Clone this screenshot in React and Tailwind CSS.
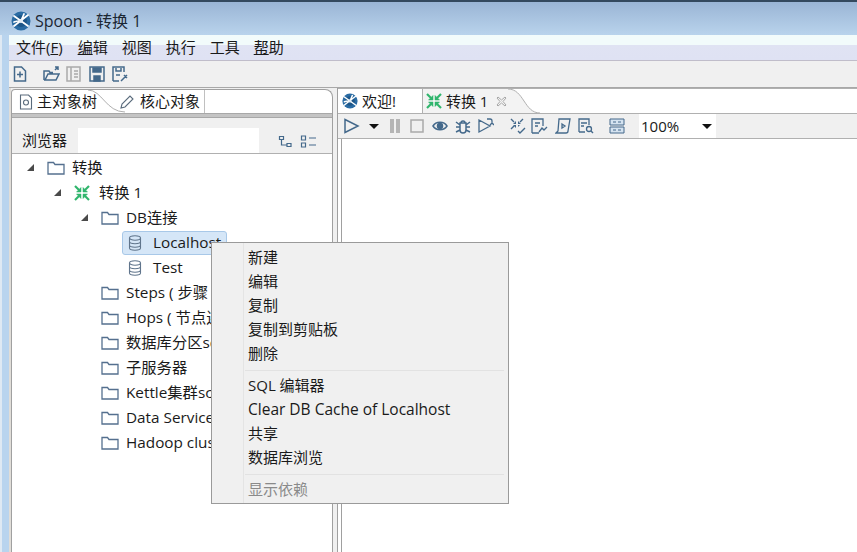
const font = { fontFamily: '"Open Sans", "Noto Sans CJK SC", sans-serif' };

const SpoonLogo = ({ size = 20 }) => (
  <svg width={size} height={size} viewBox="0 0 20 20" className="shrink-0">
    <circle cx="10" cy="10" r="9.500" fill="#2a6ba3" />
    <circle cx="10" cy="10" r="6" fill="#1d5688" />
    <path d="M3 5l14 10M17 4L3 15M10 9L3 11M10 10l3-7" stroke="#fff" strokeWidth="1.800" strokeLinecap="round" />
    <circle cx="10" cy="10" r="2" fill="#e4eef6" />
  </svg>
);

const TransIcon = () => (
  <svg width="16" height="16" viewBox="0 0 16 16" className="shrink-0">
    <g fill="#2fb56c" stroke="#2fb56c">
      <path d="M1 1l4 4" strokeWidth="2.200" fill="none" />
      <path d="M15 1l-4 4" strokeWidth="2.200" fill="none" />
      <path d="M1 15l4-4" strokeWidth="2.200" fill="none" />
      <path d="M15 15l-4-4" strokeWidth="2.200" fill="none" />
      <path d="M2.500 7h4.500V2.500zM13.500 7H9V2.500zM2.500 9h4.500v4.500zM13.500 9H9v4.500z" strokeWidth="0.500" />
    </g>
  </svg>
);

const Folder = () => (
  <svg width="18" height="14" viewBox="0 0 18 14" fill="none" className="shrink-0">
    <path d="M1 13V1.500h5.500l1.500 2h9V13z" stroke="#55708f" strokeWidth="1.300" fill="#fff" />
  </svg>
);

const Db = () => (
  <svg width="14" height="16" viewBox="0 0 14 16" fill="none" stroke="#60758c" strokeWidth="1.100" className="shrink-0">
    <ellipse cx="7" cy="3" rx="5.500" ry="2.200" />
    <path d="M1.500 3v10c0 1.200 2.500 2.200 5.500 2.200s5.500-1 5.500-2.200V3M1.500 6.500c0 1.200 2.500 2.200 5.500 2.200s5.500-1 5.500-2.200M1.500 10c0 1.200 2.500 2.200 5.500 2.200s5.500-1 5.500-2.200" />
  </svg>
);

const Arrow = () => (
  <svg width="9" height="9" viewBox="0 0 9 9" className="shrink-0">
    <path d="M8 1v7H1z" fill="#4a4a4a" />
  </svg>
);

const Tool = ({ children, w = 16, className = "" }) => (
  <svg width={w} height="16" viewBox={`0 0 ${w} 16`} fill="none" stroke="#44698b" strokeWidth="1.500" className={`shrink-0 ${className}`}>
    {children}
  </svg>
);

const Caret = ({ className = "" }) => (
  <svg width="10" height="5" viewBox="0 0 10 5" className={`shrink-0 ${className}`}>
    <path d="M0 0h10L5 5z" fill="#111" />
  </svg>
);

const TreeRow = ({ indent, arrow, icon, label, selected }) => (
  <div className="flex h-[25px] items-center" style={{ paddingLeft: indent }}>
    <div className="w-[21px] shrink-0">{arrow && <Arrow />}</div>
    {selected ? (
      <span className="ml-[-6px] flex h-[24px] w-[105px] shrink-0 items-center rounded-[3px] border border-[#a8c8e8] bg-[#d5e6f7] pl-[5px]">
        <span className="w-[25px] shrink-0">{icon}</span>
        <span className="text-[15.3px] text-[#1a1a1a]">{label}</span>
      </span>
    ) : (
      <>
        <span className="w-[25px] shrink-0">{icon}</span>
        <span className="whitespace-nowrap text-[15.3px] text-[#1a1a1a]">{label}</span>
      </>
    )}
  </div>
);

const MenuItem = ({ label, disabled, latin }) => (
  <div className={`flex h-[24px] items-center pl-[36px] ${latin ? "text-[15.5px]" : "pb-[2px] text-[15px]"} ${disabled ? "text-[#8a8a8a]" : "text-[#1a1a1a]"}`}>
    {label}
  </div>
);

const App = () => {
  return (
    <div className="relative flex h-[552px] w-[857px] flex-col overflow-hidden bg-white" style={font}>
      {/* title bar */}
      <div className="flex h-[35px] shrink-0 items-center gap-[4px] border-t-2 border-t-[#34495e] bg-gradient-to-b from-[#9ab5d5] to-[#b9d3ec] pl-[11px] pt-[4px] text-[16px] text-[#1c2733]">
        <SpoonLogo />
        <span>Spoon - 转换 1</span>
      </div>

      <div className="flex min-h-0 flex-1">
        <div className="w-[9px] shrink-0 border-l-2 border-l-[#dfe9f3] bg-[#b9d4ee]"></div>
        <div className="flex min-w-0 flex-1 flex-col">
          {/* menu bar */}
          <div className="flex h-[26px] shrink-0 items-center gap-[14px] border-b border-[#c0bdca] bg-[linear-gradient(#f2fbfb_0,#f2fbfb_10px,#e0e3f3_10px,#dfe2f3_100%)] pl-[7px] text-[15px] text-[#1a1a1a]">
            <span className="mr-[1px]">文件(<span className="underline">F</span>)</span>
            <span><span className="underline">编</span>辑</span>
            <span>视图</span>
            <span>执行</span>
            <span>工具</span>
            <span><span className="underline">帮</span>助</span>
          </div>

          {/* main toolbar */}
          <div className="flex h-[27px] shrink-0 items-center border-b border-[#a8a8a8] bg-[#f0f0f0] pl-[4px]">
            <Tool w={14}>
              <path d="M1.500 1h7l4 4v10h-11zM7 5.500v6M4 8.500h6" />
            </Tool>
            <Tool w={17} className="ml-[16px]">
              <path d="M1 14V5h5l1 1.500h3M1 14h12l3-6H5l-3 6M12 4l3-3M12 1h3v3" />
            </Tool>
            <Tool w={15} className="ml-[6px]">
              <path d="M1 1h13v14H1zM5 1v14M8 5h4M8 8h4M8 11h4" stroke="#a9a9a9" />
            </Tool>
            <Tool className="ml-[8px]">
              <path d="M1 1h14v14H1z" />
              <path d="M4 2h8v4H4zM5 10h6v5H5z" fill="#44698b" />
            </Tool>
            <Tool className="ml-[7px]">
              <path d="M1 15V1h11v5M1 15h6M4 2v3h5V2M4 9h4M9 15l6-6M12 9l3 3" />
            </Tool>
          </div>

          <div className="flex min-h-0 flex-1 bg-[#f0f0f0]">
            <div className="w-[2px] shrink-0 bg-[#e0ddd8]"></div>

            {/* left panel */}
            <div className="mt-px flex w-[322px] shrink-0 flex-col rounded-tl-[4px] rounded-tr-[8px] border-l border-r border-t border-[#a0a0a0] bg-white">
              <div className="relative flex h-[23px] shrink-0 items-center text-[15px] text-[#1a1a1a]">
                <Tool w={14} className="ml-[7px]">
                  <path d="M1.500 1h8l3 3v11h-11z" stroke="#5a6b7c" strokeWidth="1.100" />
                  <circle cx="7" cy="8.500" r="2.500" stroke="#5a6b7c" strokeWidth="1.100" />
                </Tool>
                <span className="ml-[4px]">主对象树</span>
                <Tool className="ml-[22px]">
                  <path d="M2 14l1-4 8-8 3 3-8 8z" stroke="#5a6b7c" strokeWidth="1.100" />
                </Tool>
                <span className="ml-[5px]">核心对象</span>
                <div className="ml-[4px] h-full w-px bg-[#c0c0c0]"></div>
                {/* curved edge between the two tabs */}
                <svg width="38" height="23" viewBox="0 0 38 23" fill="none" className="absolute left-[76px] top-0">
                  <path d="M0 0c14 0 18 22 37 22" stroke="#b0b0b0" />
                </svg>
              </div>
              <div className="h-[5px] shrink-0 border-b border-t border-[#a8a8a8] bg-[#c4c4c4]"></div>

              <div className="flex h-[36px] shrink-0 items-end border-b border-[#b0b0b0] bg-[#f0f0f0] pl-[10px]">
                <span className="flex h-[25px] items-center text-[15px] text-[#1a1a1a]">浏览器</span>
                <div className="ml-[11px] h-[25px] w-[181px] bg-white"></div>
                <div className="ml-[19px] flex h-[23px] items-center gap-[7px]">
                  <Tool w={15}>
                    <path d="M1.500 2.500h4v3h-4zM9 9.500h4v3H9zM3.500 5.500v5.500H9" strokeWidth="1.200" />
                  </Tool>
                  <Tool w={17}>
                    <path d="M1.500 2h4v4h-4zM1.500 9h4v4h-4zM9 4h7M9 11h7" strokeWidth="1.200" />
                  </Tool>
                </div>
              </div>

              <div className="flex-1 pt-px">
                <TreeRow indent={14} arrow icon={<Folder />} label="转换" />
                <TreeRow indent={41} arrow icon={<TransIcon />} label="转换 1" />
                <TreeRow indent={68} arrow icon={<Folder />} label="DB连接" />
                <TreeRow indent={95} icon={<Db />} label="Localhost" selected />
                <TreeRow indent={95} icon={<Db />} label="Test" />
                <TreeRow indent={68} icon={<Folder />} label="Steps ( 步骤 )" />
                <TreeRow indent={68} icon={<Folder />} label="Hops ( 节点连接 )" />
                <TreeRow indent={68} icon={<Folder />} label="数据库分区schemas" />
                <TreeRow indent={68} icon={<Folder />} label="子服务器" />
                <TreeRow indent={68} icon={<Folder />} label="Kettle集群schemas" />
                <TreeRow indent={68} icon={<Folder />} label="Data Services" />
                <TreeRow indent={68} icon={<Folder />} label="Hadoop clusters" />
              </div>
            </div>

            {/* right panel */}
            <div className="ml-[4px] flex min-w-0 flex-1 flex-col border-l border-[#a0a0a0] bg-white">
              <div className="relative flex h-[25px] shrink-0 items-center border-t border-[#b0b0b0] text-[15px] text-[#1a1a1a]">
                <div className="ml-[4px] flex items-center gap-[4px]">
                  <SpoonLogo size={16} />
                  <span>欢迎!</span>
                </div>
                <div className="ml-[26px] flex h-full items-center border-l border-[#b0b0b0] bg-[#f3f3f3] pl-[3px]">
                  <TransIcon />
                  <span className="ml-[4px]">转换 1</span>
                  <svg width="13" height="11" viewBox="0 0 11 11" className="ml-[7px]" stroke="#a8a8a8" fill="none">
                    <path d="M1 2l1-1 3.500 3 3.500-3 1 1-3 3.500 3 3.500-1 1-3.500-3-3.500 3-1-1 3-3.500z" />
                  </svg>
                </div>
                <svg width="32" height="24" viewBox="0 0 32 24" className="shrink-0">
                  <path d="M0 0c16 0 16 24 32 24H0z" fill="#f3f3f3" />
                  <path d="M0 0c16 0 16 24 32 24" fill="none" stroke="#b0b0b0" />
                </svg>
              </div>

              <div className="flex h-[26px] shrink-0 items-center border-b border-t border-[#b0b0b0] bg-[#f0f0f0] pl-[6px]">
                <Tool><path d="M1 1.500L14 8 1 14.500z" /></Tool>
                <Caret className="ml-[9px]" />
                <Tool w={12} className="ml-[10px]"><path d="M1 1h4v14H1zM7 1h4v14H7z" fill="#b5b5b5" stroke="none" /></Tool>
                <Tool w={14} className="ml-[9px]"><path d="M1 2h12v12H1z" stroke="#a9a9a9" /></Tool>
                <Tool className="ml-[8px]">
                  <path d="M1 8c3-5 11-5 14 0-3 5-11 5-14 0z" />
                  <circle cx="8" cy="8" r="2.500" fill="#44698b" />
                </Tool>
                <Tool className="ml-[7px]">
                  <path d="M5 5h6v7a3 3 0 01-6 0zM6 5a2 2 0 014 0M1 4l4 3M15 4l-4 3M1 9h4M15 9h-4M1 14l4-2M15 14l-4-2" />
                </Tool>
                <Tool className="ml-[7px]"><path d="M1 2l11 6-11 6zM9 1h3a2 2 0 012 2v2M12 7l2-2 2 2" strokeWidth="1.300" /></Tool>
                <Tool className="ml-[16px]">
                  <path d="M1 1l3 3M13 1l-3 3M1 11l3-3M8 13l2 2 5-5" strokeWidth="1.400" />
                  <path d="M3 6h3V3zM11 6H8V3zM3 7h3v3zM8 7h2l-2 2z" fill="#44698b" stroke="none" />
                </Tool>
                <Tool w={17} className="ml-[5px]"><path d="M1 15V1h11v7M1 15h7M4 5h5M4 8h3M8 14l3-4 2 2 3-3" strokeWidth="1.300" /></Tool>
                <Tool w={17} className="ml-[7px]"><path d="M4 1h11l-2 12a2 2 0 01-2 2H1l2-2zM7 6l3 2-3 2z" strokeWidth="1.300" /></Tool>
                <Tool className="ml-[6px]"><path d="M1 14V1h10v6M1 14h6M3 5h6M3 8h3" strokeWidth="1.300" /><circle cx="11" cy="11" r="2.500" strokeWidth="1.300" /><path d="M13 13l2 2" /></Tool>
                <Tool className="ml-[15px]"><path d="M1 1h14v6H1zM1 9h14v6H1z" strokeWidth="1" fill="#d5e3f0" /><path d="M4 4h3M9 4h3M4 12h3M9 12h3" strokeWidth="1" /></Tool>
                <div className="ml-[14px] flex h-[24px] w-[77px] items-center justify-between bg-white pl-[2px] pr-[4px] text-[15px] text-[#1a1a1a]">
                  <span>100%</span>
                  <Caret />
                </div>
              </div>
              <div className="ml-[3px] flex-1 border-l border-[#a0a0a0] bg-white"></div>
            </div>
          </div>
        </div>
      </div>

      {/* context menu */}
      <div className="absolute left-[211px] top-[242px] h-[262px] w-[298px] border border-[#9a9a9a] bg-[#f0f0f0] py-[3px]">
        <div className="absolute bottom-0 left-[31px] top-0 w-px bg-[#e4e4e4]"></div>
        <MenuItem label="新建" />
        <MenuItem label="编辑" />
        <MenuItem label="复制" />
        <MenuItem label="复制到剪贴板" />
        <MenuItem label="删除" />
        <div className="mb-[3px] ml-[33px] mr-[4px] mt-[4px] h-px bg-[#e2e2e2]"></div>
        <MenuItem label="SQL 编辑器" />
        <MenuItem label="Clear DB Cache of Localhost" latin />
        <MenuItem label="共享" />
        <MenuItem label="数据库浏览" />
        <div className="mb-[3px] ml-[33px] mr-[4px] mt-[4px] h-px bg-[#e2e2e2]"></div>
        <MenuItem label="显示依赖" disabled />
      </div>
    </div>
  );
};

export default App;
